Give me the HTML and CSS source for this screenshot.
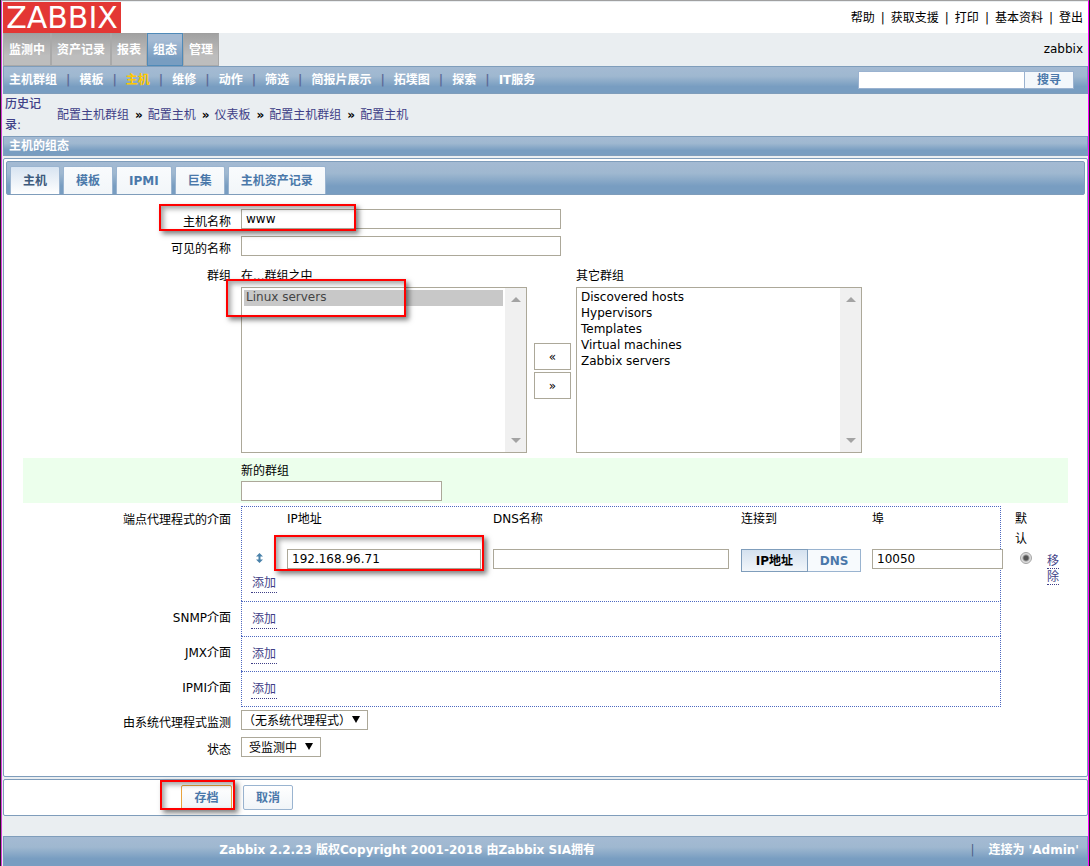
FILE: index.html
```html
<!DOCTYPE html>
<html lang="zh-CN">
<head>
<meta charset="utf-8">
<title>主机的组态</title>
<link rel="stylesheet" href="styles.css">
</head>
<body>
<div class="page">
  <header class="top">
    <a class="logo" href="#">ZABBIX</a>
    <nav class="top-links"><a href="#">帮助</a><span>|</span><a href="#">获取支援</a><span>|</span><a href="#">打印</a><span>|</span><a href="#">基本资料</a><span>|</span><a href="#">登出</a></nav>
  </header>
  <div class="main-nav">
    <nav class="main-tabs">
      <a href="#">监测中</a><a href="#">资产记录</a><a href="#">报表</a><a href="#" class="active">组态</a><a href="#">管理</a>
    </nav>
    <span class="server">zabbix</span>
  </div>
  <div class="sub-nav bar">
    <nav class="sub-links"><a href="#">主机群组</a><span>|</span><a href="#">模板</a><span>|</span><a href="#" class="current">主机</a><span>|</span><a href="#">维修</a><span>|</span><a href="#">动作</a><span>|</span><a href="#">筛选</a><span>|</span><a href="#">简报片展示</a><span>|</span><a href="#">拓墣图</a><span>|</span><a href="#">探索</a><span>|</span><a href="#">IT服务</a></nav>
    <form class="search"><input type="text" aria-label="搜寻"><button type="button">搜寻</button></form>
  </div>
  <div class="history">
    <span class="history-title">历史记录:</span>
    <nav class="crumbs"><a href="#">配置主机群组</a><b>»</b><a href="#">配置主机</a><b>»</b><a href="#">仪表板</a><b>»</b><a href="#">配置主机群组</a><b>»</b><a href="#">配置主机</a></nav>
  </div>
  <h1 class="title bar">主机的组态</h1>

  <main class="panel">
    <div class="tabs bar">
      <button type="button" class="tab selected">主机</button><button type="button" class="tab">模板</button><button type="button" class="tab">IPMI</button><button type="button" class="tab">巨集</button><button type="button" class="tab">主机资产记录</button>
    </div>
    <form class="form">
      <div class="row">
        <label class="label" for="host">主机名称</label>
        <div class="field"><input class="text wide" id="host" type="text" value="www"><i class="mark mark-host"></i></div>
      </div>
      <div class="row">
        <label class="label" for="visible">可见的名称</label>
        <div class="field"><input class="text wide" id="visible" type="text"></div>
      </div>
      <div class="row">
        <span class="label">群组</span>
        <div class="groups">
          <div class="group">
            <label for="in-groups">在...群组之中</label>
            <div class="listbox">
              <select id="in-groups" size="10" multiple><option class="chosen">Linux servers</option></select>
              <span class="scroll"><svg viewBox="0 0 10 5"><path d="M5 0 10 5H0z"/></svg><svg viewBox="0 0 10 5"><path d="M0 0H10L5 5z"/></svg></span>
              <i class="mark mark-group"></i>
            </div>
          </div>
          <div class="movers"><button type="button">«</button><button type="button">»</button></div>
          <div class="group">
            <label for="other-groups">其它群组</label>
            <div class="listbox">
              <select id="other-groups" size="10" multiple><option>Discovered hosts</option><option>Hypervisors</option><option>Templates</option><option>Virtual machines</option><option>Zabbix servers</option></select>
              <span class="scroll"><svg viewBox="0 0 10 5"><path d="M5 0 10 5H0z"/></svg><svg viewBox="0 0 10 5"><path d="M0 0H10L5 5z"/></svg></span>
            </div>
          </div>
        </div>
      </div>
      <div class="row new-group">
        <span class="label"></span>
        <div class="field"><label for="new-group">新的群组</label><input class="text medium" id="new-group" type="text"></div>
      </div>
      <div class="row interface">
        <span class="label">端点代理程式的介面</span>
        <div class="box agent">
          <table class="interfaces">
            <colgroup><col class="c-drag"><col class="c-ip"><col class="c-dns"><col class="c-connect"><col class="c-port"><col class="c-default"><col class="c-remove"></colgroup>
            <thead><tr><th></th><th>IP地址</th><th>DNS名称</th><th>连接到</th><th>埠</th><th>默认</th><th></th></tr></thead>
            <tbody><tr>
              <td><svg class="drag" viewBox="0 0 7 10"><path d="M3.500 0 7 3.500H4.500v3H7L3.500 10 0 6.500h2.500v-3H0z"/></svg></td>
              <td><div class="field"><input class="text ip" type="text" value="192.168.96.71" aria-label="IP地址"><i class="mark mark-ip"></i></div></td>
              <td><input class="text dns" type="text" aria-label="DNS名称"></td>
              <td><div class="toggle"><button type="button" class="on">IP地址</button><button type="button">DNS</button></div></td>
              <td><input class="text port" type="text" value="10050" aria-label="埠"></td>
              <td><input class="radio" type="radio" checked aria-label="默认"></td>
              <td><div class="remove"><a class="add" href="#">移除</a></div></td>
            </tr></tbody>
          </table>
          <a class="add" href="#">添加</a>
        </div>
      </div>
      <div class="row interface"><span class="label">SNMP介面</span><div class="box"><a class="add" href="#">添加</a></div></div>
      <div class="row interface"><span class="label">JMX介面</span><div class="box"><a class="add" href="#">添加</a></div></div>
      <div class="row interface last"><span class="label">IPMI介面</span><div class="box"><a class="add" href="#">添加</a></div></div>
      <div class="row">
        <label class="label" for="proxy">由系统代理程式监测</label>
        <div class="field"><select class="drop proxy" id="proxy"><option>（无系统代理程式）</option></select><svg class="arrow" viewBox="0 0 8 7"><path d="M0 0H8L4 7z"/></svg></div>
      </div>
      <div class="row">
        <label class="label" for="status">状态</label>
        <div class="field"><select class="drop status" id="status"><option>受监测中</option></select><svg class="arrow" viewBox="0 0 8 7"><path d="M0 0H8L4 7z"/></svg></div>
      </div>
    </form>
  </main>
  <div class="actions">
    <div class="field"><button type="button" class="action save">存档</button><i class="mark mark-save"></i></div>
    <button type="button" class="action">取消</button>
  </div>
  <footer class="footer bar">
    <span class="copyright">Zabbix 2.2.23 版权Copyright 2001-2018 由Zabbix SIA拥有</span>
    <span class="signed"><i>|</i>连接为 'Admin'</span>
  </footer>
</div>
</body>
</html>
```
FILE: styles.css
```css
* { box-sizing: border-box; }
body {
  margin: 0;
  font: 12px/20px "DejaVu Sans", "Noto Sans CJK SC", sans-serif;
  color: #000;
  background: #222;
}
input, button, select { font: inherit; color: inherit; margin: 0; border-radius: 0; }
a { color: inherit; text-decoration: none; }

.page {
  margin-right: 1px;
  margin-left: 1px;
  padding: 1px 0 0 1px;
  border-top: 1px solid #a0a0a0;
  border-left: 1px solid #d63bd6;
  border-right: 1px solid #ff00ff;
  background: #eaeef1;
  min-height: 100vh;
  display: flex;
  flex-direction: column;
}
.bar {
  border: 1px solid #7f9dbb;
  background: linear-gradient(#a4bad3, #9fb8d0 35%, #789dc1 75%, #789dc1);
}

.top { display: flex; justify-content: space-between; height: 31px; background: #fff; }
.logo {
  width: 118px;
  text-align: center;
  font-size: 30px;
  line-height: 32px;
  color: #fff;
  background: #e33734;
}
.top-links { padding: 6px 5px 0 0; }
.top-links span { padding: 0 6px; }

.main-nav { display: flex; justify-content: space-between; height: 33px; }
.main-tabs { display: flex; }
.main-tabs a {
  padding: 6px 5px 0;
  border: 1px solid #a9a9a9;
  border-top-color: #9f9f9f;
  background: linear-gradient(#a2a2a2, #bdbdbd 70%);
  color: #fff;
  font-weight: bold;
}
.main-tabs a.active {
  border-color: #4f8ab8;
  background: linear-gradient(#a4bad3 20%, #789dc1 80%);
}
.server { padding: 6px 5px 0 0; }

.sub-nav {
  display: flex;
  justify-content: space-between;
  align-items: center;
  height: 28px;
  padding: 0 13px 0 5px;
  color: #fff;
  font-weight: bold;
}
.sub-nav .current { color: #ffc800; }
.sub-links span { padding: 0 9px; color: #5d6a98; }
.search { display: flex; height: 18px; }
.search input { width: 167px; height: 18px; border: 1px solid #9ab2d0; background: #fff; }
.search button {
  width: 50px;
  margin-left: -1px;
  padding: 0;
  line-height: 16px;
  border: 1px solid #9ab2d0;
  background: #f3f7fb;
  color: #4a78aa;
  font-weight: bold;
}

.history { display: flex; align-items: center; height: 42px; color: #3f3f87; }
.history-title { width: 54px; padding: 0 14px 0 2px; line-height: 21px; font-weight: 500; }
.crumbs b { padding: 0 5px 0 6px; color: #000; }

.title {
  height: 20px;
  margin: 0 0 2px;
  padding: 0 5px;
  font-size: 12px;
  line-height: 18px;
  color: #fff;
}

.panel, .actions { border: 1px solid #7f9dbb; border-radius: 2px; background: #fff; }
.panel { padding: 2px 2px 12px; }
.tabs { display: flex; align-items: flex-end; gap: 3px; height: 34px; padding: 0 3px; border-radius: 2px; }
.tab {
  height: 28px;
  padding: 0 12px;
  border: 1px solid #9ab4d0;
  border-bottom: 0;
  border-radius: 2px 2px 0 0;
  background: linear-gradient(#f9fbfd, #f2f6f9);
  color: #4a78aa;
  font-weight: bold;
}
.tab.selected { background: linear-gradient(#d8e4f1, #fff); color: #3d5a7c; }

.form { padding: 14px 17px 0; }
.row { display: flex; margin-bottom: 7px; }
.label { width: 208px; margin-right: 10px; flex: none; text-align: right; line-height: 26px; height: 20px; }
.field { position: relative; display: flex; }
.text { height: 20px; padding: 0 4px; border: 1px solid #aca899; background: #fff; }
.wide { width: 320px; }
.medium { width: 201px; }

.groups { display: flex; }
.group label { display: block; height: 24px; line-height: 26px; }
.listbox { position: relative; display: flex; width: 286px; height: 166px; border: 1px solid #aca899; background: #fff; }
.listbox select {
  flex: 1;
  min-width: 0;
  padding: 2px;
  border: 0;
  outline: 0;
  background: #fff;
  overflow: hidden;
  scrollbar-width: none;
}
.listbox option { height: 16px; min-height: 16px; padding: 0 2px; line-height: 16px; }
.listbox .chosen { background: #c8c8c8; color: #444; }
.scroll {
  width: 21px;
  padding: 9px 5px 9px 6px;
  display: flex;
  flex-direction: column;
  justify-content: space-between;
  background: #f0f0f0;
  fill: #a3a3a3;
}
.movers { display: flex; flex-direction: column; gap: 2px; padding: 80px 5px 0 7px; }
.movers button { width: 37px; height: 27px; padding: 0; border: 1px solid #aca899; background: #fff; }

.new-group { height: 45px; margin: -2px 0 3px; background: #ecffec; }
.new-group .field { flex-direction: column; }
.new-group label { height: 23px; line-height: 26px; }

.interface { margin: 0; }
.interface .label { line-height: 35px; }
.interface:has(.agent) .label { line-height: 28px; }
.box {
  flex: none;
  width: 760px;
  height: 35px;
  padding: 7px 9px 0;
  border: 1px dotted #4d68c0;
  border-width: 1px 1px 0;
}
.last .box { height: 36px; border-bottom-width: 1px; }
.last { margin-bottom: 3px; }
.agent { height: 95px; padding-top: 0; }
.add { display: inline-block; padding: 0 1px; color: #3f3f87; line-height: 17px; border-bottom: 1px dotted #3f3f87; }
.interfaces { table-layout: fixed; width: 818px; border-collapse: collapse; }
.interfaces th, .interfaces td { padding: 0; text-align: left; vertical-align: top; font-weight: normal; }
.interfaces th { height: 42px; padding-top: 2px; line-height: 20px; }
.interfaces td { height: 24px; }
.c-drag { width: 36px; }
.c-ip { width: 206px; }
.c-dns { width: 248px; }
.c-connect { width: 131px; }
.c-port { width: 143px; }
.c-default { width: 31px; }
.c-remove { width: 23px; }
.interfaces th:nth-child(6) { padding-right: 14px; }
.drag { display: block; width: 7px; height: 10px; margin: 4px 5px; fill: #4a82aa; }
.ip { width: 194px; }
.dns { width: 236px; }
.port { width: 131px; }
.toggle { display: flex; width: 120px; height: 23px; }
.toggle button { flex: 1 1 54px; padding: 0; border: 1px solid #9ab4d0; border-left: 0; background: #f7fafd; color: #4a78aa; font-weight: bold; }
.toggle .on { flex: 0 0 67px; border: 1px solid #7f9dbb; background: linear-gradient(#d4e1ef, #f2f6fa); color: #000; }
.radio {
  appearance: none;
  display: block;
  width: 12px;
  height: 12px;
  margin: 3px 0 0 5px;
  border: 1px solid #a6a6a6;
  border-radius: 50%;
  background: radial-gradient(circle, #555 0 2px, #ddd 4px);
}
.remove { width: 15px; height: 24px; padding: 4px 0 0 1px; line-height: 16px; }
.remove .add { display: inline; padding: 0; line-height: 16px; }

.drop {
  appearance: none;
  height: 20px;
  padding: 1px 7px 0;
  border: 1px solid #aca899;
  background: #fff;
  line-height: 18px;
}
.proxy { width: 127px; padding-left: 1px; }
.status { width: 80px; }
.arrow { position: absolute; top: 6px; right: 8px; width: 8px; height: 7px; pointer-events: none; }

.actions { display: flex; gap: 11px; height: 37px; margin: 2px 0 20px; padding: 5px 0 0 177px; }
.action {
  width: 50px;
  height: 25px;
  padding: 0;
  border: 1px solid #9ab4d0;
  border-radius: 2px;
  background: linear-gradient(#fff, #f0f4f8);
  color: #4a78aa;
  font-weight: bold;
}
.save { width: 51px; border-color: #e8a33d; }

.footer {
  flex: 1;
  display: grid;
  grid-template-columns: 3fr 1fr;
  padding: 3px 8px 0 0;
  border-bottom: 0;
  color: #fff;
  font-weight: bold;
  line-height: 21px;
}
.copyright { text-align: center; }
.signed { text-align: right; }
.signed i { margin-right: 14px; font-style: normal; font-weight: normal; color: #4b5f86; }

.mark {
  position: absolute;
  z-index: 1;
  border: 2px solid #f00;
  box-shadow: 3px 3px 5px rgba(0, 0, 0, .5), inset 3px 3px 5px rgba(0, 0, 0, .35);
  pointer-events: none;
}
.mark-host { left: -82px; top: -5px; width: 197px; height: 27px; }
.mark-group { left: -16px; top: -9px; width: 180px; height: 38px; }
.mark-ip { left: -13px; top: -14px; width: 210px; height: 36px; }
.mark-save { left: -21px; top: -5px; width: 75px; height: 30px; }
```
